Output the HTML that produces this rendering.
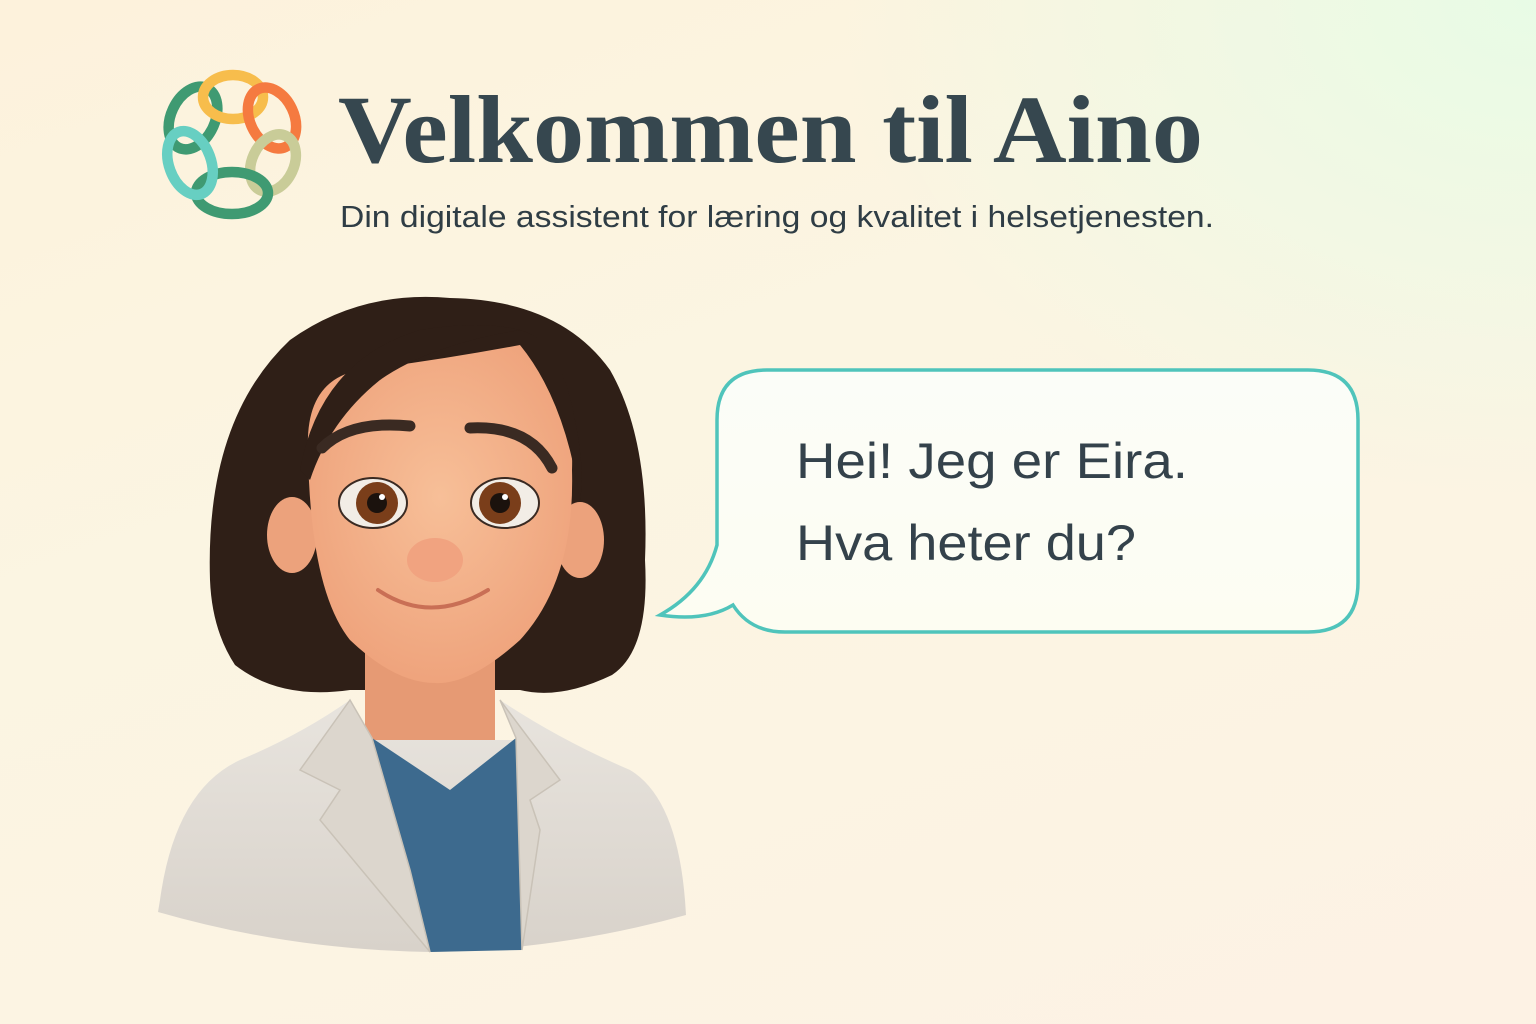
<!DOCTYPE html>
<html><head><meta charset="utf-8"><style>
html,body{margin:0;padding:0;width:1536px;height:1024px;overflow:hidden}
body{background:linear-gradient(160deg,#fdf2dc 0%,#fbf5e2 40%,#fdf2e4 100%);position:relative}
.g{position:absolute;inset:0;background:radial-gradient(ellipse 700px 500px at 1536px 0px,rgba(230,252,230,0.9),rgba(230,252,230,0) 100%)}
svg{position:absolute;left:0;top:0}
</style></head><body><div class="g"></div>
<svg width="1536" height="1024" viewBox="0 0 1536 1024">
<defs>
<linearGradient id="bub" x1="0" y1="0" x2="0" y2="1"><stop offset="0" stop-color="#fbfdf8"/><stop offset="1" stop-color="#fdfdf2"/></linearGradient>
<radialGradient id="face" cx="0.5" cy="0.45" r="0.6"><stop offset="0" stop-color="#f7bf98"/><stop offset="1" stop-color="#eea17a"/></radialGradient>
<linearGradient id="coat" x1="0" y1="0" x2="0" y2="1"><stop offset="0" stop-color="#e8e4de"/><stop offset="1" stop-color="#d8d2ca"/></linearGradient>
</defs>
<g fill="none" stroke-width="10.5">
<ellipse cx="193" cy="118" rx="22" ry="33" transform="rotate(25 193 118)" stroke="#3f9a72"/>
<ellipse cx="233" cy="97" rx="30" ry="22" stroke="#f7bd4c"/>
<ellipse cx="272" cy="118" rx="22" ry="32" transform="rotate(-25 272 118)" stroke="#f57a40"/>
<ellipse cx="273" cy="163" rx="21" ry="30" transform="rotate(25 273 163)" stroke="#c9cc98"/>
<ellipse cx="232" cy="193" rx="36" ry="21" stroke="#3f9a72"/>
<ellipse cx="190" cy="163" rx="21" ry="33" transform="rotate(-20 190 163)" stroke="#67cfc2"/>
</g>
<text x="338" y="162" font-family="Liberation Serif,serif" font-weight="bold" font-size="96" fill="#36474f" textLength="865" lengthAdjust="spacingAndGlyphs">Velkommen til Aino</text>
<text x="340" y="227" font-family="Liberation Sans,sans-serif" font-size="31" fill="#2f3d45" textLength="874" lengthAdjust="spacingAndGlyphs">Din digitale assistent for læring og kvalitet i helsetjenesten.</text>
<path d="M767 370 H1308 Q1358 370 1358 420 V582 Q1358 632 1308 632 H785 Q750 632 733 605 Q705 622 660 615 Q705 590 717 545 V420 Q717 370 767 370 Z" fill="url(#bub)" stroke="#4fc4bb" stroke-width="3.5"/>
<text x="796" y="478" font-family="Liberation Sans,sans-serif" font-size="50" fill="#34424b" textLength="392" lengthAdjust="spacingAndGlyphs">Hei! Jeg er Eira.</text>
<text x="796" y="560" font-family="Liberation Sans,sans-serif" font-size="50" fill="#34424b" textLength="340" lengthAdjust="spacingAndGlyphs">Hva heter du?</text>
<!-- character -->
<path d="M210 580 Q205 420 290 340 Q360 290 450 298 Q560 300 610 370 Q650 440 645 560 Q650 650 612 675 Q560 700 520 690 L350 690 Q280 700 235 665 Q212 630 210 580 Z" fill="#2f1f17"/>
<path d="M365 620 L365 760 L495 760 L495 620 Z" fill="#e69a74"/>
<path d="M160 900 Q175 790 240 760 Q300 735 350 700 L370 740 L520 740 L500 700 Q560 740 630 770 Q680 800 686 915 Q560 950 430 952 Q290 950 158 912 Z" fill="url(#coat)"/>
<path d="M372 738 L450 790 L516 738 L522 950 L430 952 L410 870 Z" fill="#3d6a8e"/>
<path d="M350 700 L300 770 L340 790 L320 820 L430 952 L410 870 L372 738 Z" fill="#dcd6cd" stroke="#c9c2b7" stroke-width="1.5"/>
<path d="M500 700 L560 780 L530 800 L540 830 L522 950 L516 738 Z" fill="#dcd6cd" stroke="#c9c2b7" stroke-width="1.5"/>
<ellipse cx="292" cy="535" rx="25" ry="38" fill="#eca27c"/>
<ellipse cx="580" cy="540" rx="24" ry="38" fill="#eca27c"/>
<path d="M308 450 Q305 380 360 370 Q440 360 520 345 Q575 380 572 470 Q575 580 520 640 Q470 685 435 683 Q395 683 350 640 Q310 590 308 450 Z" fill="url(#face)"/>
<path d="M300 470 Q320 360 420 330 Q480 320 520 330 Q430 345 380 380 Q330 420 310 480 Z" fill="#2f1f17"/>
<path d="M520 330 Q560 340 575 420 Q585 470 580 500 Q565 400 520 345 Z" fill="#2f1f17"/>
<path d="M322 448 Q350 420 410 426" stroke="#3a2a22" stroke-width="11" stroke-linecap="round" fill="none"/>
<path d="M470 428 Q530 425 552 468" stroke="#3a2a22" stroke-width="11" stroke-linecap="round" fill="none"/>
<ellipse cx="373" cy="503" rx="34" ry="25" fill="#f2ede6" stroke="#3a2a22" stroke-width="2"/>
<circle cx="377" cy="503" r="21" fill="#7a3e1a"/><circle cx="377" cy="503" r="10" fill="#1b120d"/><circle cx="382" cy="497" r="3" fill="#fff"/>
<ellipse cx="505" cy="503" rx="34" ry="25" fill="#f2ede6" stroke="#3a2a22" stroke-width="2"/>
<circle cx="500" cy="503" r="21" fill="#7a3e1a"/><circle cx="500" cy="503" r="10" fill="#1b120d"/><circle cx="505" cy="497" r="3" fill="#fff"/>
<ellipse cx="435" cy="560" rx="28" ry="22" fill="#f1a380"/>
<path d="M378 590 Q430 625 488 590" stroke="#c96f55" stroke-width="4" fill="none" stroke-linecap="round"/>
</svg>
</body></html>
